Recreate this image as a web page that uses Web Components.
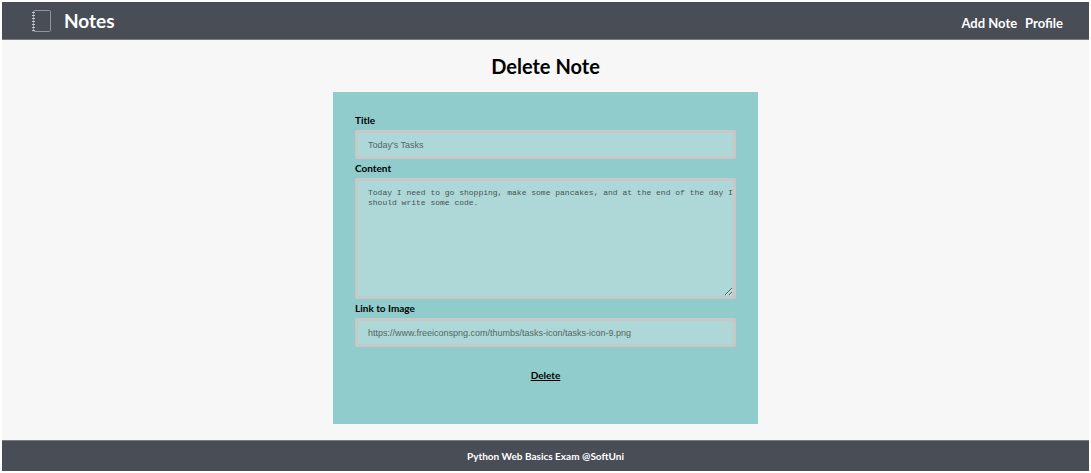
<!DOCTYPE html>
<html lang="en">
<head>
<meta charset="utf-8">
<title>Delete Note</title>
<style>
html { height: 100%; background: #fff; }
body { margin: 0; min-height: 100%; display: grid; font-family: Lato, "Open Sans", sans-serif; font-weight: 700; }
</style>
</head>
<body>
<notes-app></notes-app>

<template id="app-template">
<style>
:host { display: flex; flex-direction: column; margin: 2px; background: #f7f7f7; color: #000; }
main { flex: 1; display: flex; flex-direction: column; align-items: center; padding: 12px 16px 16px; }
h1 { margin: 0 0 12px; font-size: 20px; line-height: 28px; font-weight: 700; }
</style>
<notes-header></notes-header>
<main>
<h1>Delete Note</h1>
<note-form></note-form>
</main>
<notes-footer>Python Web Basics Exam @SoftUni</notes-footer>
</template>

<template id="header-template">
<style>
:host { display: block; background: #494d56; color: #fff; border-bottom: 1px solid #777b81; }
header { display: flex; align-items: center; justify-content: space-between; padding: 0 26px 0 29px; height: 37px; }
a { color: inherit; text-decoration: none; }
.brand { display: flex; align-items: center; gap: 12px; font-size: 19px; line-height: 24px; }
svg { display: block; }
nav { display: flex; gap: 8px; padding-top: 4px; font-size: 13px; line-height: 18px; }
</style>
<header>
<a class="brand" href="#">
<svg width="21" height="24" viewBox="0 0 21 24" fill="none" aria-hidden="true">
<rect x="2.5" y="1.5" width="17" height="21" rx="1" stroke="#93969b"/>
<path d="M1 3.5h3M1 6.5h3M1 9.5h3M1 12.5h3M1 15.5h3M1 18.5h3M1 21.5h3" stroke="#c4c6c9"/>
</svg>
<span>Notes</span>
</a>
<nav><a href="#">Add Note</a><a href="#">Profile</a></nav>
</header>
</template>

<template id="footer-template">
<style>
:host { display: block; background: #494d56; color: #fff; border-top: 1px solid #777b81; }
footer { padding: 7px 16px 6px; text-align: center; font-size: 10px; line-height: 17px; }
</style>
<footer><slot></slot></footer>
</template>

<template id="form-template">
<style>
:host { display: block; box-sizing: border-box; width: 100%; max-width: 425px; padding: 20px 22px 40px; background: #90cccb; }
form { display: flex; flex-direction: column; }
a { align-self: center; margin-top: 18px; color: #000; font-size: 10px; line-height: 18px; }
</style>
<form>
<note-field label="Title" value="Today's Tasks"></note-field>
<note-field label="Content" multiline value="Today I need to go shopping, make some pancakes, and at the end of the day I should write some code."></note-field>
<note-field label="Link to Image" value="https://www.freeiconspng.com/thumbs/tasks-icon/tasks-icon-9.png"></note-field>
<a href="#">Delete</a>
</form>
</template>

<template id="field-template">
<style>
:host { display: block; }
label { display: block; margin-bottom: 2px; font-size: 10px; line-height: 16px; }
input, textarea {
  display: block; box-sizing: border-box; width: 100%; margin: 0 0 1px; border: 3px solid #c8c8c8; border-radius: 2px;
  background: #add8d7; color: #566565; outline: none;
}
input { height: 29px; padding: 0 10px; font: 9px "Liberation Sans", Arial, sans-serif; }
textarea { height: 121px; padding: 7px 0 7px 10px; font: 8px/10px "Liberation Mono", monospace; color: #465454; resize: vertical; }
</style>
<label for="control"></label>
</template>

<script>
class TemplateElement extends HTMLElement {
  constructor() {
    super();
    const template = document.getElementById(this.constructor.templateId);
    this.attachShadow({ mode: "open" }).append(template.content.cloneNode(true));
  }
}
class NoteField extends TemplateElement {
  static templateId = "field-template";
  connectedCallback() {
    if (this.control) return;
    this.shadowRoot.querySelector("label").textContent = this.getAttribute("label");
    this.control = document.createElement(this.hasAttribute("multiline") ? "textarea" : "input");
    this.control.id = "control";
    this.control.readOnly = true;
    this.control.value = this.getAttribute("value");
    this.shadowRoot.append(this.control);
  }
}
class NoteForm extends TemplateElement { static templateId = "form-template"; }
class NotesHeader extends TemplateElement { static templateId = "header-template"; }
class NotesFooter extends TemplateElement { static templateId = "footer-template"; }
class NotesApp extends TemplateElement { static templateId = "app-template"; }
customElements.define("note-field", NoteField);
customElements.define("note-form", NoteForm);
customElements.define("notes-header", NotesHeader);
customElements.define("notes-footer", NotesFooter);
customElements.define("notes-app", NotesApp);
</script>
</body>
</html>
